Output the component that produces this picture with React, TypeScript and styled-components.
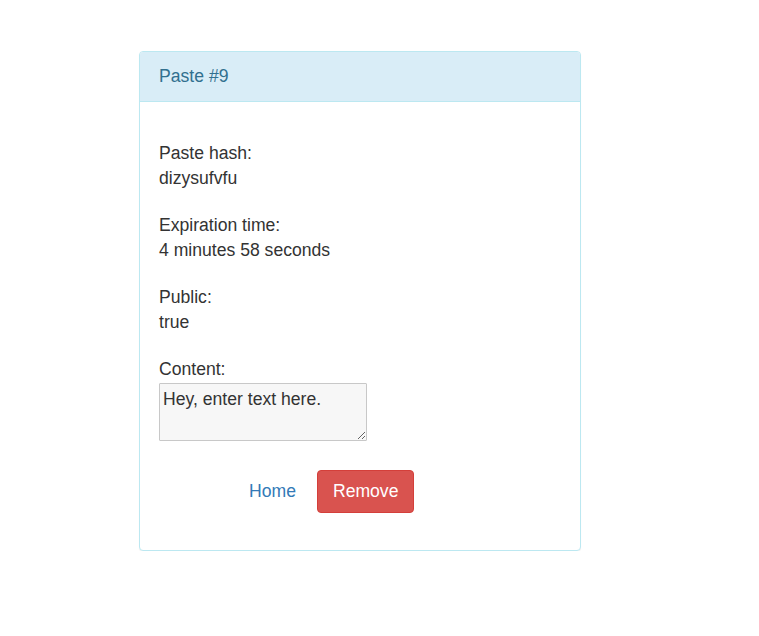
import styled, { createGlobalStyle } from 'styled-components'

const GlobalStyle = createGlobalStyle`
    body {
        margin: 0;
        background: #fff;
        font-family: "Liberation Sans", Arial, sans-serif;
        font-size: 17.6px;
        line-height: 25px;
        color: #333;
    }
`

const fields = [
    { label: 'Paste hash:', value: 'dizysufvfu' },
    { label: 'Expiration time:', value: '4 minutes 58 seconds' },
    { label: 'Public:', value: 'true' },
]

const App = () => {
    return (
        <Page>
            <GlobalStyle />
            <Panel>
                <PanelHeading>Paste #9</PanelHeading>
                <PanelBody>
                    {fields.map((field) => (
                        <Field key={field.label}>
                            <Label>{field.label}</Label>
                            <Value>{field.value}</Value>
                        </Field>
                    ))}
                    <Field>
                        <Label>Content:</Label>
                        <ContentArea defaultValue="Hey, enter text here." />
                    </Field>
                    <Actions>
                        <LinkButton href="#">Home</LinkButton>
                        <DangerButton type="button">Remove</DangerButton>
                    </Actions>
                </PanelBody>
            </Panel>
        </Page>
    )
}

const Page = styled.div`
    padding: 51px 0 0 139px;
`

const Panel = styled.div`
    width: 442px;
    box-sizing: border-box;
    border: 1px solid #bce8f1;
    border-radius: 4px;
    background: #fff;
    box-shadow: 0 1px 1px rgba(0, 0, 0, 0.05);
`

const PanelHeading = styled.div`
    padding: 12px 19px;
    background: #d9edf7;
    color: #31708f;
    border-bottom: 1px solid #bce8f1;
    border-radius: 3px 3px 0 0;
`

const PanelBody = styled.div`
    padding: 38.5px 19px 37px;
`

const Field = styled.div`
    display: flex;
    flex-direction: column;
    align-items: flex-start;
    margin-bottom: 22px;
`

const Label = styled.div``

const Value = styled.div``

const ContentArea = styled.textarea`
    box-sizing: border-box;
    width: 208px;
    height: 58px;
    margin-top: 1.5px;
    padding: 5px 3px 2px;
    border: 1px solid #c8c8c8;
    border-radius: 1px;
    background: #f7f7f7;
    color: #333;
    font-family: "Liberation Sans", Arial, sans-serif;
    font-size: 17.6px;
    line-height: 21px;
`

const Actions = styled.div`
    display: flex;
    align-items: center;
    gap: 4px;
    padding-left: 73px;
    margin-top: 29px;
`

const LinkButton = styled.a`
    padding: 8px 16px;
    color: #337ab7;
    text-decoration: none;
    border: 1px solid transparent;
`

const DangerButton = styled.button`
    padding: 8px 15px;
    border: 1px solid #d43f3a;
    border-radius: 4px;
    background: #d9534f;
    color: #fff;
    font-family: "Liberation Sans", Arial, sans-serif;
    font-size: 17.6px;
    line-height: 25px;
    cursor: pointer;
`

export default App
